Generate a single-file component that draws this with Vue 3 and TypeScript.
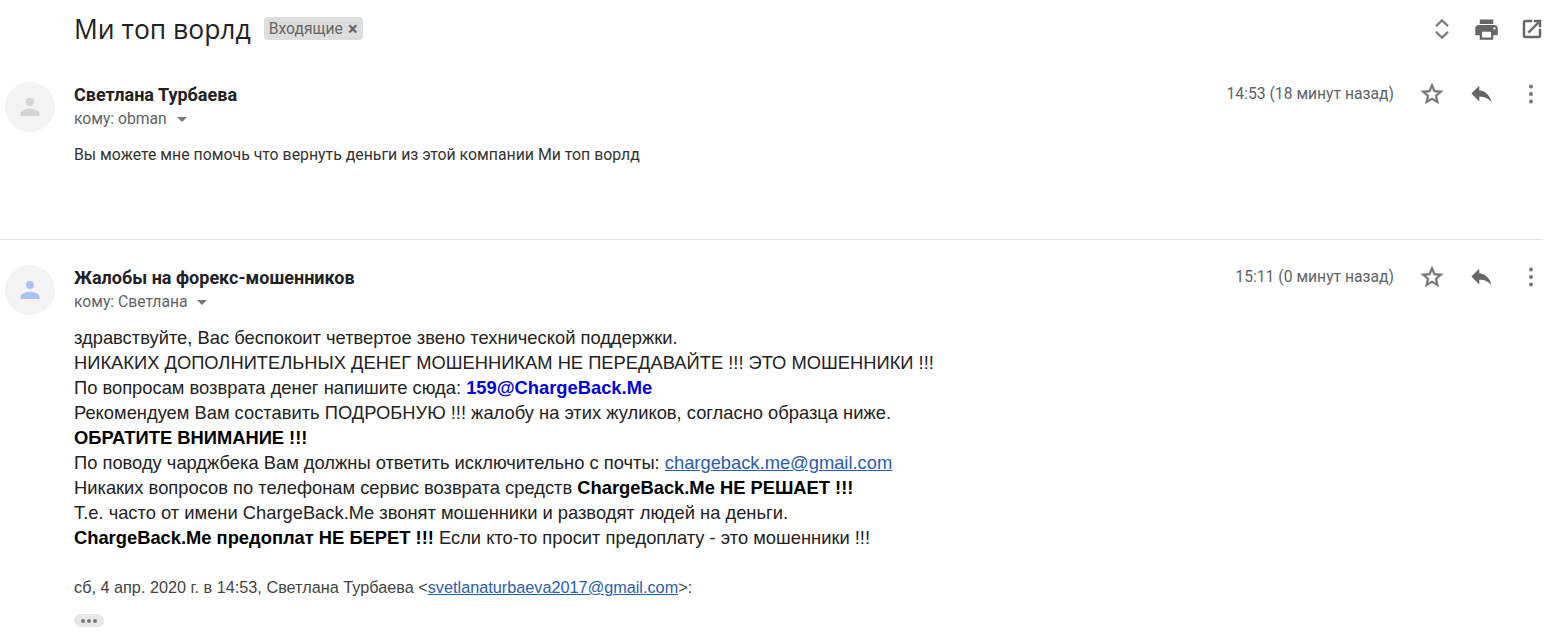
<script setup lang="ts">
interface Line {
  parts: { text: string; kind?: 'bold' | 'blue' | 'link' }[];
}

const lines: Line[] = [
  { parts: [{ text: 'здравствуйте, Вас беспокоит четвертое звено технической поддержки.' }] },
  { parts: [{ text: 'НИКАКИХ ДОПОЛНИТЕЛЬНЫХ ДЕНЕГ МОШЕННИКАМ НЕ ПЕРЕДАВАЙТЕ !!! ЭТО МОШЕННИКИ !!!' }] },
  { parts: [{ text: 'По вопросам возврата денег напишите сюда: ' }, { text: '159@ChargeBack.Me', kind: 'blue' }] },
  { parts: [{ text: 'Рекомендуем Вам составить ПОДРОБНУЮ !!! жалобу на этих жуликов, согласно образца ниже.' }] },
  { parts: [{ text: 'ОБРАТИТЕ ВНИМАНИЕ !!!', kind: 'bold' }] },
  { parts: [{ text: 'По поводу чарджбека Вам должны ответить исключительно с почты: ' }, { text: 'chargeback.me@gmail.com', kind: 'link' }] },
  { parts: [{ text: 'Никаких вопросов по телефонам сервис возврата средств ' }, { text: 'ChargeBack.Me НЕ РЕШАЕТ !!!', kind: 'bold' }] },
  { parts: [{ text: 'Т.е. часто от имени ChargeBack.Me звонят мошенники и разводят людей на деньги.' }] },
  { parts: [{ text: 'ChargeBack.Me предоплат НЕ БЕРЕТ !!!', kind: 'bold' }, { text: ' Если кто-то просит предоплату - это мошенники !!!' }] }
];
</script>

<template>
  <div class="page">
    <header class="subject">
      <h1>Ми топ ворлд</h1>
      <span class="label">Входящие<i>×</i></span>
      <div class="top-icons">
        <svg viewBox="0 0 24 24" width="24" height="24"><path d="M6 9.2 12 3.4l6 5.8M6 14.8l6 5.8 6-5.8" fill="none" stroke="#808080" stroke-width="2.4" /></svg>
        <svg viewBox="0 0 24 24" width="27" height="27"><path fill="#666" d="M19 8H5c-1.66 0-3 1.34-3 3v6h4v4h12v-4h4v-6c0-1.66-1.34-3-3-3zm-3 11H8v-5h8v5zm3-7c-.55 0-1-.45-1-1s.45-1 1-1 1 .45 1 1-.45 1-1 1zm-1-9H6v4h12V3z" /></svg>
        <svg viewBox="0 0 24 24" width="24" height="24"><path fill="#666" stroke="#666" stroke-width=".5" d="M19 19H5V5h7V3H5c-1.11 0-2 .9-2 2v14c0 1.1.89 2 2 2h14c1.1 0 2-.9 2-2v-7h-2v7zM14 3v2h3.59l-9.83 9.83 1.41 1.41L19 6.41V10h2V3h-7z" /></svg>
      </div>
    </header>

    <section class="message first">
      <div class="avatar">
        <svg viewBox="0 0 24 24" width="24" height="24"><circle cx="12" cy="7" r="4" fill="#d4d4d4" /><path fill="#d4d4d4" d="M2.5 19c0-3.6 6.3-5.2 9.5-5.2s9.5 1.6 9.5 5.2v2h-19z" /></svg>
      </div>
      <div class="content">
        <div class="head">
          <div class="who">
            <div class="name">Светлана Турбаева</div>
            <div class="to">кому: obman <b class="caret"></b></div>
          </div>
          <span class="time">14:53 (18 минут назад)</span>
          <div class="actions">
            <svg viewBox="0 0 24 24" width="26" height="26"><path fill="#757575" stroke="#757575" stroke-width=".5" d="M22 9.24l-7.19-.62L12 2 9.19 8.63 2 9.24l5.46 4.73L5.82 21 12 17.27 18.18 21l-1.63-7.03L22 9.24zM12 15.4l-3.76 2.27 1-4.28-3.32-2.88 4.38-.38L12 6.1l1.71 4.04 4.38.38-3.32 2.88 1 4.28L12 15.4z" /></svg>
            <svg viewBox="0 0 24 24" width="27" height="27"><path fill="#666" d="M10 9V5l-7 7 7 7v-4.1c5 0 8.5 1.6 11 5.1-1-5-4-10-11-11z" /></svg>
            <svg viewBox="0 0 24 24" width="24" height="24"><circle cx="12" cy="4.5" r="2" fill="#777" /><circle cx="12" cy="12" r="2" fill="#777" /><circle cx="12" cy="19.5" r="2" fill="#777" /></svg>
          </div>
        </div>
        <p class="short">Вы можете мне помочь что вернуть деньги из этой компании Ми топ ворлд</p>
      </div>
    </section>

    <section class="message second">
      <div class="avatar">
        <svg viewBox="0 0 24 24" width="24" height="24"><circle cx="12" cy="7" r="4" fill="#a9c4f2" /><path fill="#a9c4f2" d="M2.5 19c0-3.6 6.3-5.2 9.5-5.2s9.5 1.6 9.5 5.2v2h-19z" /></svg>
      </div>
      <div class="content">
        <div class="head">
          <div class="who">
            <div class="name">Жалобы на форекс-мошенников</div>
            <div class="to">кому: Светлана <b class="caret"></b></div>
          </div>
          <span class="time">15:11 (0 минут назад)</span>
          <div class="actions">
            <svg viewBox="0 0 24 24" width="26" height="26"><path fill="#757575" stroke="#757575" stroke-width=".5" d="M22 9.24l-7.19-.62L12 2 9.19 8.63 2 9.24l5.46 4.73L5.82 21 12 17.27 18.18 21l-1.63-7.03L22 9.24zM12 15.4l-3.76 2.27 1-4.28-3.32-2.88 4.38-.38L12 6.1l1.71 4.04 4.38.38-3.32 2.88 1 4.28L12 15.4z" /></svg>
            <svg viewBox="0 0 24 24" width="27" height="27"><path fill="#666" d="M10 9V5l-7 7 7 7v-4.1c5 0 8.5 1.6 11 5.1-1-5-4-10-11-11z" /></svg>
            <svg viewBox="0 0 24 24" width="24" height="24"><circle cx="12" cy="4.5" r="2" fill="#777" /><circle cx="12" cy="12" r="2" fill="#777" /><circle cx="12" cy="19.5" r="2" fill="#777" /></svg>
          </div>
        </div>
        <div class="body">
          <div v-for="(line, i) in lines" :key="i">
            <template v-for="part in line.parts" :key="part.text">
              <b v-if="part.kind === 'bold'">{{ part.text }}</b>
              <b v-else-if="part.kind === 'blue'" class="blue">{{ part.text }}</b>
              <a v-else-if="part.kind === 'link'">{{ part.text }}</a>
              <span v-else>{{ part.text }}</span>
            </template>
          </div>
        </div>
        <p class="quote">сб, 4 апр. 2020 г. в 14:53, Светлана Турбаева &lt;<a>svetlanaturbaeva2017@gmail.com</a>&gt;:</p>
        <div class="more"><i></i><i></i><i></i></div>
      </div>
    </section>
  </div>
</template>

<style>
html,
body {
  background: #fff;
  overflow: hidden;
}
</style>

<style scoped>
.page {
  width: 1562px;
  height: 635px;
  overflow: hidden;
  font-family: 'Liberation Sans', Arial, sans-serif;
  color: #222;
}

.subject {
  display: flex;
  align-items: center;
  height: 58px;
  padding-left: 74px;
}

h1 {
  margin: 0 13px 0 0;
  font-family: 'Open Sans', sans-serif;
  font-size: 26.45px;
  font-weight: 400;
  color: #202124;
}

.label {
  display: flex;
  align-items: center;
  margin-top: -1px;
  padding: 2px 6px 2px 5px;
  border-radius: 4px;
  background: #ddd;
  color: #666;
  font-family: Roboto, sans-serif;
  font-size: 15.7px;
  line-height: 19px;
}

.label i {
  margin-left: 5px;
  font-size: 18px;
  font-style: normal;
  font-weight: 700;
  color: #666;
}

.top-icons {
  display: flex;
  align-items: center;
  gap: 20px;
  margin-left: auto;
  padding-right: 18px;
}

.top-icons svg:first-child {
  margin-right: -1px;
}

.message {
  display: flex;
  box-sizing: border-box;
  margin-right: 19px;
}

.first {
  height: 182px;
  padding-top: 24px;
  border-bottom: 1px solid #e6e6e6;
}

.second {
  padding-top: 25px;
}

.avatar {
  display: flex;
  flex: none;
  align-items: center;
  justify-content: center;
  width: 50px;
  height: 50px;
  margin: 0 19px 0 5px;
  border-radius: 50%;
  background: #f3f3f3;
}

.content {
  flex: 1;
}

.head {
  display: flex;
  align-items: flex-start;
}

.who {
  flex: 1;
}

.name {
  font-family: Roboto, sans-serif;
  font-size: 18px;
  font-weight: 700;
  line-height: 26px;
  color: #202124;
}

.to {
  margin-top: -1px;
  font-family: Roboto, sans-serif;
  font-size: 15.7px;
  line-height: 23px;
  color: #5f6368;
}

.caret {
  display: inline-block;
  margin-left: 6px;
  vertical-align: 2px;
  border: 5px solid transparent;
  border-top-color: #777;
  border-bottom: 0;
}

.time {
  font-family: Roboto, sans-serif;
  font-size: 15.7px;
  line-height: 24px;
  color: #5f6368;
}

.actions {
  display: flex;
  align-items: center;
  gap: 23px;
  margin-top: -2px;
  margin-left: 25px;
}

.actions svg:last-child {
  margin-left: 1px;
}

.short {
  margin: 13px 0 0;
  font-family: Roboto, sans-serif;
  font-size: 15.85px;
  line-height: 24px;
  color: #333;
}

.body {
  margin-top: 12px;
  font-size: 18.34px;
  line-height: 25px;
  color: #222;
}

.body b {
  color: #000;
}

.body .blue {
  color: #0000e0;
}

a {
  color: #2a5db0;
  text-decoration: underline;
}

.quote {
  margin: 25px 0 0;
  font-size: 16.25px;
  line-height: 25px;
  color: #444;
}

.more {
  display: flex;
  gap: 2px;
  align-items: center;
  justify-content: center;
  width: 30px;
  height: 13px;
  margin-top: 14px;
  border-radius: 7px;
  background: #e8e8e8;
}

.more i {
  width: 4px;
  height: 4px;
  border-radius: 50%;
  background: #777;
}
</style>
